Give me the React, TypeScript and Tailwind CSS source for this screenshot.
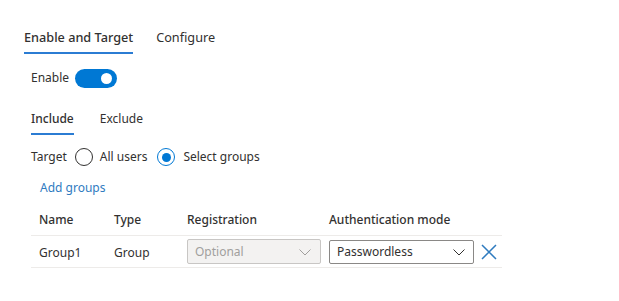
import React from "react";

function Chevron({ color }: { color: string }) {
  return (
    <svg width="14" height="14" viewBox="0 0 14 14" fill="none">
      <path d="M1.5 4.5 L7 10 L12.5 4.5" stroke={color} strokeWidth="1" />
    </svg>
  );
}

export default function App() {
  return (
    <div className="w-[619px] h-[301px] bg-white text-[#323130] text-[12px] font-['Noto_Sans',sans-serif] relative overflow-hidden">
      {/* main tabs */}
      <div className="flex items-start gap-[23px] pl-[24px] pt-[27px]">
        <div className="flex flex-col">
          <span className="text-[12.7px] leading-[20px] font-medium text-[#323130]">Enable and Target</span>
          <span className="mt-[5px] h-[2px] bg-[#2b7cd3] w-full" />
        </div>
        <span className="text-[12.7px] leading-[20px] text-[#323130]">Configure</span>
      </div>

      {/* enable toggle */}
      <div className="flex items-center gap-[6px] pl-[31px] mt-[14px]">
        <span className="leading-[20px]">Enable</span>
        <div className="w-[42px] h-[19px] rounded-full bg-[#0078d4] flex items-center justify-end pr-[5px]">
          <div className="w-[11px] h-[11px] rounded-full bg-white" />
        </div>
      </div>

      {/* include/exclude */}
      <div className="flex items-start gap-[26px] pl-[31px] mt-[21px]">
        <div className="flex flex-col">
          <span className="leading-[20px] font-medium">Include</span>
          <span className="mt-[4px] h-[2px] bg-[#2b7cd3] w-full" />
        </div>
        <span className="leading-[20px]">Exclude</span>
      </div>

      {/* target */}
      <div className="flex items-center pl-[31px] mt-[12px]">
        <span className="leading-[20px]">Target</span>
        <div className="ml-[8px] w-[18px] h-[18px] rounded-full border border-[#323130]" />
        <span className="ml-[7px]">All users</span>
        <div className="ml-[10px] w-[18px] h-[18px] rounded-full border border-[#0078d4] flex items-center justify-center">
          <div className="w-[9px] h-[9px] rounded-full bg-[#0078d4]" />
        </div>
        <span className="ml-[8px]">Select groups</span>
      </div>

      {/* add groups */}
      <div className="pl-[40px] mt-[11px] text-[#2f7bbf] leading-[20px]">Add groups</div>

      {/* table */}
      <div className="ml-[31px] w-[471px] mt-[6px]">
        <div className="grid grid-cols-[75px_73px_142px_1fr] pl-[8px] h-[32px] items-center font-medium border-b border-[#edebe9]">
          <span>Name</span>
          <span>Type</span>
          <span>Registration</span>
          <span>Authentication mode</span>
        </div>
        <div className="grid grid-cols-[75px_73px_142px_1fr] pl-[8px] h-[32px] items-center border-b border-[#edebe9]">
          <span className="pt-[2px]">Group1</span>
          <span className="pt-[2px]">Group</span>
          <div className="w-[134px] h-[25px] border border-[#c8c6c4] bg-[#f3f2f1] rounded-[2px] flex items-center justify-between pl-[7px] pr-[8px] text-[#a19f9d]">
            <span>Optional</span>
            <Chevron color="#a19f9d" />
          </div>
          <div className="flex items-center">
            <div className="w-[145px] h-[24px] border border-[#8a8886] bg-white rounded-[2px] flex items-center justify-between pl-[7px] pr-[7px]">
              <span>Passwordless</span>
              <Chevron color="#323130" />
            </div>
            <svg className="ml-[6px]" width="18" height="18" viewBox="0 0 18 18" fill="none">
              <path d="M2 2 L16 16 M16 2 L2 16" stroke="#2f7bbf" strokeWidth="1.5" />
            </svg>
          </div>
        </div>
      </div>
    </div>
  );
}
